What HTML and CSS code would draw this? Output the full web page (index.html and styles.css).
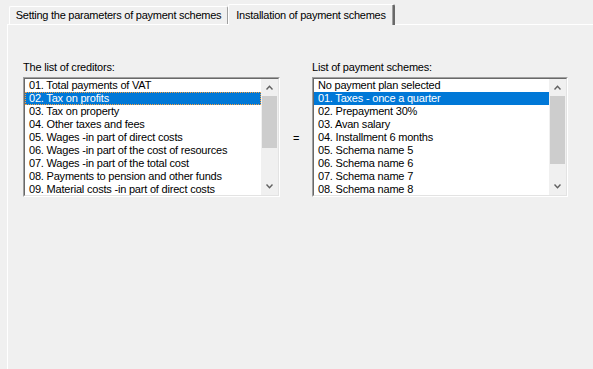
FILE: index.html
```html
<!DOCTYPE html>
<html lang="en">
<head>
    <meta charset="UTF-8">
    <title>Payment schemes</title>
    <link rel="stylesheet" href="styles.css">
</head>
<body>
    <div id="window">
        <div class="tabs">
            <div class="tab">Setting the parameters of payment schemes</div>
            <div class="tab active">Installation of payment schemes</div>
        </div>

        <div class="panel">
            <div class="grid">
                <div class="label">The list of creditors:</div>
                <div></div>
                <div class="label">List of payment schemes:</div>

                <!-- creditors -->
                <div class="listbox creditors">
                    <div class="listbox-inner">
                        <div class="items">
                            <div class="item">01. Total payments of VAT</div>
                            <div class="item selected focused">02. Tax on profits</div>
                            <div class="item">03. Tax on property</div>
                            <div class="item">04. Other taxes and fees</div>
                            <div class="item">05. Wages -in part of direct costs</div>
                            <div class="item">06. Wages -in part of the cost of resources</div>
                            <div class="item">07. Wages -in part of the total cost</div>
                            <div class="item">08. Payments to pension and other funds</div>
                            <div class="item">09. Material costs -in part of direct costs</div>
                        </div>
                        <div class="scrollbar">
                            <div class="arrow">
                                <svg width="7" height="5" viewBox="0 0 7 5"><polyline points="0.5,4.5 3.5,1.2 6.5,4.5" fill="none" stroke="#606060" stroke-width="1.4"/></svg>
                            </div>
                            <div class="track">
                                <div class="thumb thumb-short"></div>
                            </div>
                            <div class="arrow">
                                <svg width="7" height="5" viewBox="0 0 7 5"><polyline points="0.5,0.5 3.5,3.8 6.5,0.5" fill="none" stroke="#606060" stroke-width="1.4"/></svg>
                            </div>
                        </div>
                    </div>
                </div>

                <div class="equals">=</div>

                <!-- schemes -->
                <div class="listbox schemes">
                    <div class="listbox-inner">
                        <div class="items">
                            <div class="item">No payment plan selected</div>
                            <div class="item selected">01. Taxes - once a quarter</div>
                            <div class="item">02. Prepayment 30%</div>
                            <div class="item">03. Avan salary</div>
                            <div class="item">04. Installment 6 months</div>
                            <div class="item">05. Schema name 5</div>
                            <div class="item">06. Schema name 6</div>
                            <div class="item">07. Schema name 7</div>
                            <div class="item">08. Schema name 8</div>
                        </div>
                        <div class="scrollbar">
                            <div class="arrow">
                                <svg width="7" height="5" viewBox="0 0 7 5"><polyline points="0.5,4.5 3.5,1.2 6.5,4.5" fill="none" stroke="#606060" stroke-width="1.4"/></svg>
                            </div>
                            <div class="track">
                                <div class="thumb thumb-long"></div>
                            </div>
                            <div class="arrow">
                                <svg width="7" height="5" viewBox="0 0 7 5"><polyline points="0.5,0.5 3.5,3.8 6.5,0.5" fill="none" stroke="#606060" stroke-width="1.4"/></svg>
                            </div>
                        </div>
                    </div>
                </div>
            </div>
        </div>
    </div>
</body>
</html>
```

FILE: styles.css
```css
body {
    margin: 0;
    padding: 0;
    background: #f0f0f0;
    font-family: 'Liberation Sans', Arial, sans-serif;
    font-size: 11px;
    line-height: 13px;
    letter-spacing: -0.2px;
    color: #000;
    overflow: hidden;
}

#window {
    display: flex;
    flex-direction: column;
    height: 100vh;
}

/* tab strip */
.tabs {
    display: flex;
    align-items: flex-end;
    padding-left: 9px;
    height: 24px;
}

.tab {
    box-sizing: border-box;
    width: 219px;
    height: 18px;
    padding: 2px 0 2px 0;
    text-align: center;
    white-space: nowrap;
    letter-spacing: -0.25px;
    border-top: 1px solid #fff;
    border-left: 1px solid #fff;
    border-right: 1px solid #a0a0a0;
    border-radius: 2px 2px 0 0;
}

.tab.active {
    position: relative;
    width: 167px;
    height: 21px;
    padding-top: 4px;
    margin-bottom: -1px;
    background: #f0f0f0;
    border-right: 2px solid #696969;
    box-shadow: inset -1px 0 0 #a0a0a0;
}

/* page */
.panel {
    flex: 1;
    margin-left: 7px;
    border-top: 1px solid #fff;
    border-left: 1px solid #fff;
    padding: 36px 0 0 15px;
}

.grid {
    display: grid;
    grid-template-columns: 257px 32px 256px;
    grid-template-rows: 13px 120px;
    row-gap: 3px;
}

.label {
    white-space: nowrap;
}

.equals {
    align-self: center;
    text-align: center;
    padding-top: 2px;
}

/* list boxes */
.listbox {
    box-sizing: border-box;
    border-top: 1px solid #a0a0a0;
    border-left: 1px solid #a0a0a0;
    border-right: 1px solid #fff;
    border-bottom: 1px solid #fff;
}

.listbox-inner {
    display: flex;
    height: 100%;
    box-sizing: border-box;
    background: #fff;
    border-top: 1px solid #696969;
    border-left: 1px solid #696969;
    border-right: 1px solid #e3e3e3;
    border-bottom: 1px solid #e3e3e3;
    overflow: hidden;
}

.items {
    flex: 1;
    overflow: hidden;
}

.item {
    box-sizing: border-box;
    height: 13px;
    padding-left: 4px;
    white-space: nowrap;
}

.item.selected {
    background: #0078d7;
    color: #fff;
}

.item.focused {
    outline: 1px dotted #f5a040;
    outline-offset: -1px;
}

.scrollbar {
    width: 17px;
    display: flex;
    flex-direction: column;
    background: #f0f0f0;
}

.arrow {
    height: 17px;
    display: flex;
    align-items: center;
    justify-content: center;
}

.track {
    flex: 1;
    padding: 0 1px;
}

.thumb {
    background: #cdcdcd;
}

.thumb-short {
    height: 52px;
}

.thumb-long {
    height: 68px;
}
```
